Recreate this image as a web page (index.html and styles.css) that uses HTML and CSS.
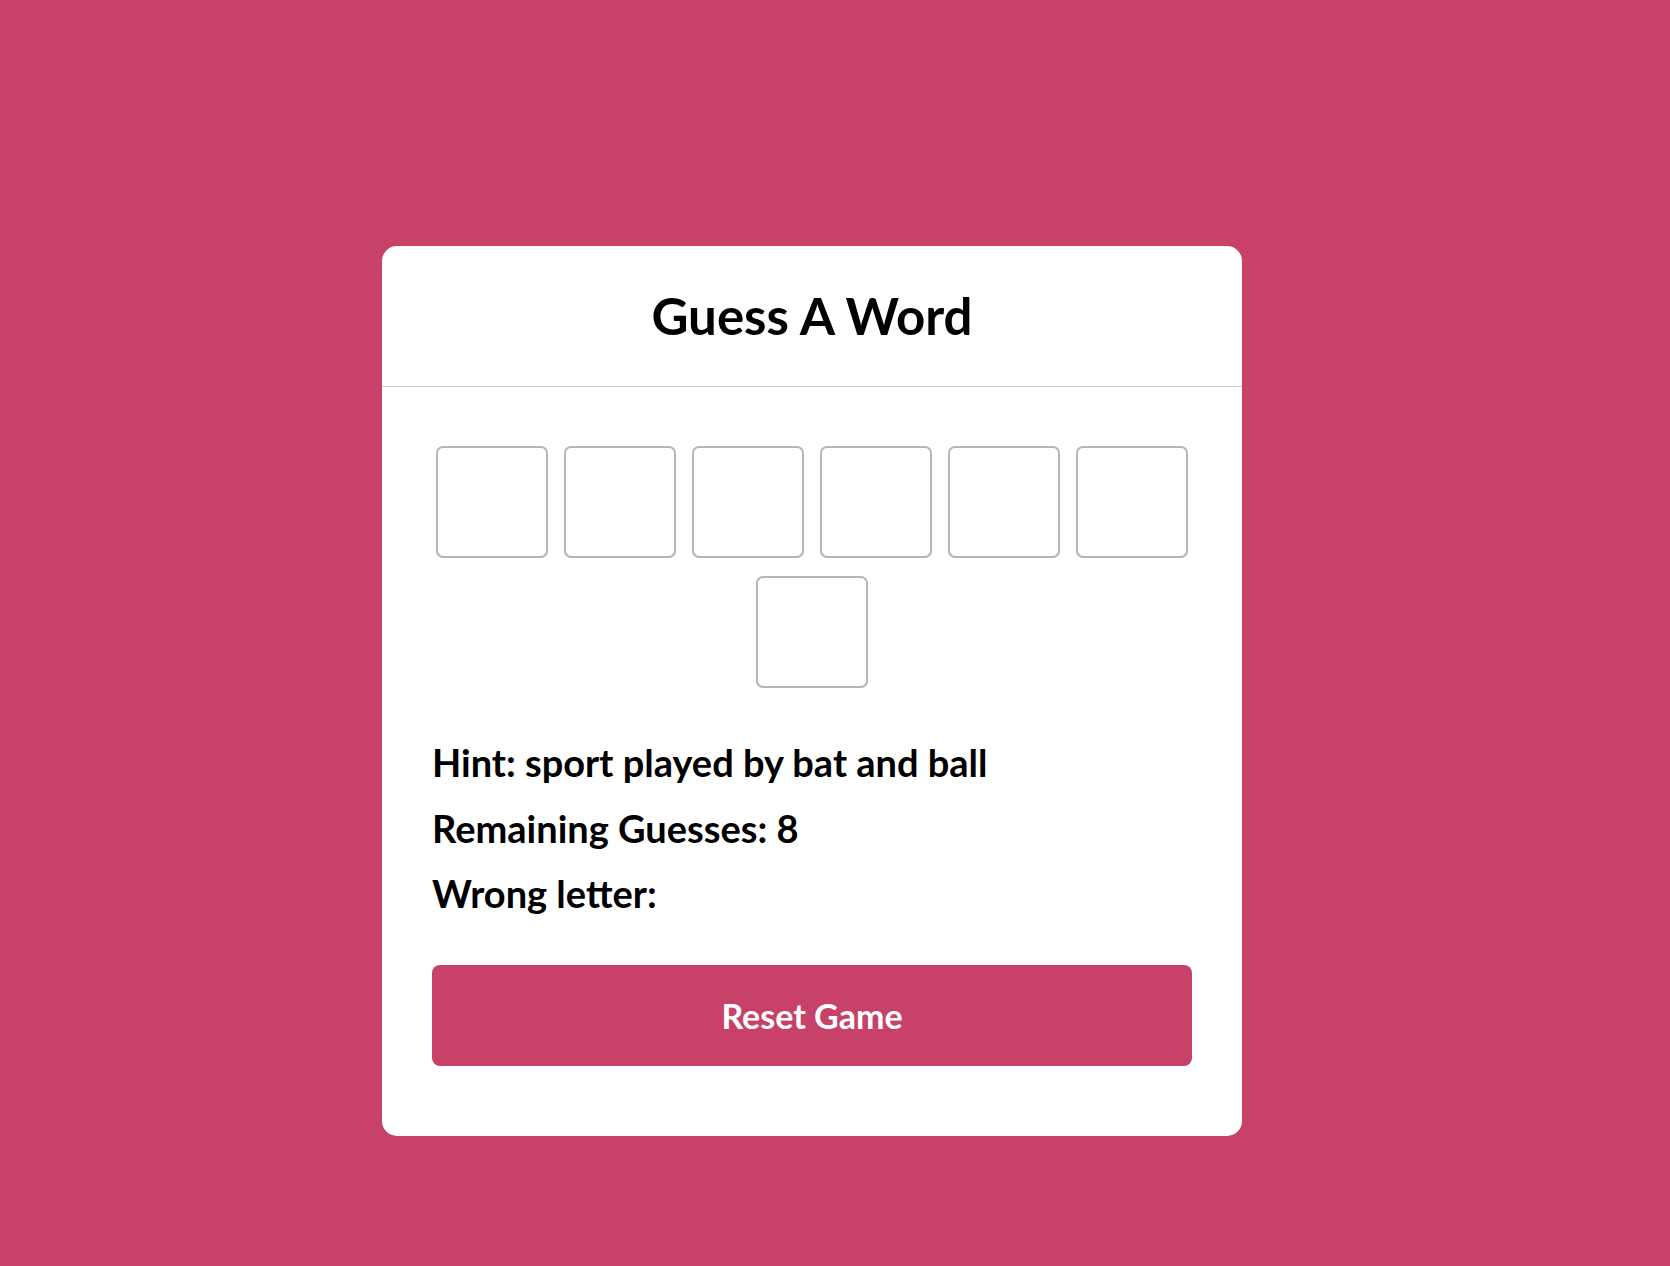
FILE: index.html
```html
<!DOCTYPE html>
<html>
<head>
  <title>Guess A Word</title>
  <link rel="stylesheet" href="styles.css">
</head>
<body>
  <div class="wrapper">
    <header>
      <h1>Guess A Word</h1>
    </header>
    <div class="content">
      <div class="inputs">
        <input type="text" maxlength="1" disabled>
        <input type="text" maxlength="1" disabled>
        <input type="text" maxlength="1" disabled>
        <input type="text" maxlength="1" disabled>
        <input type="text" maxlength="1" disabled>
        <input type="text" maxlength="1" disabled>
        <input type="text" maxlength="1" disabled>
      </div>
      <div class="details">
        <p class="hint">Hint: <span>sport played by bat and ball</span></p>
        <p class="guess-left">Remaining Guesses: <span>8</span></p>
        <p class="wrong-letter">Wrong letter: <span></span></p>
      </div>
      <button class="reset-btn">Reset Game</button>
    </div>
  </div>
</body>
</html>
```

FILE: styles.css
```css
/* Styles CSS */
* {
  margin: 0;
  padding: 0;
  box-sizing: border-box;
}

body {
  font-family: Lato, "Noto Sans", sans-serif;
  background-color: #c84169;
  min-height: 100vh;
  padding: 246px 0 0 382px;
}

.wrapper {
  width: 860px;
  background-color: #fff;
  border-radius: 15px;
}

header {
  height: 141px;
  display: flex;
  align-items: center;
  justify-content: center;
  border-bottom: 1px solid #ccc;
}

h1 {
  font-size: 51px;
  font-weight: 700;
  color: #000;
  line-height: 1.2;
}

.content {
  padding: 59px 50px 70px;
}

.inputs {
  display: flex;
  flex-wrap: wrap;
  justify-content: center;
  gap: 18px 16px;
}

.inputs input {
  width: 112px;
  height: 112px;
  border: 2px solid #b5b5b5;
  border-radius: 7px;
  background-color: #fff;
  font-size: 40px;
  text-align: center;
}

.details {
  margin-top: 52px;
}

.details p {
  font-size: 38px;
  font-weight: 700;
  color: #000;
  line-height: 1.2;
  margin-bottom: 20px;
}

.details p:last-child {
  margin-bottom: 0;
}

.reset-btn {
  display: block;
  width: 100%;
  height: 101px;
  margin-top: 48px;
  border: none;
  border-radius: 8px;
  background-color: #c84169;
  color: #fff;
  font-family: Lato, "Noto Sans", sans-serif;
  font-size: 34px;
  font-weight: 700;
  cursor: pointer;
}
```
